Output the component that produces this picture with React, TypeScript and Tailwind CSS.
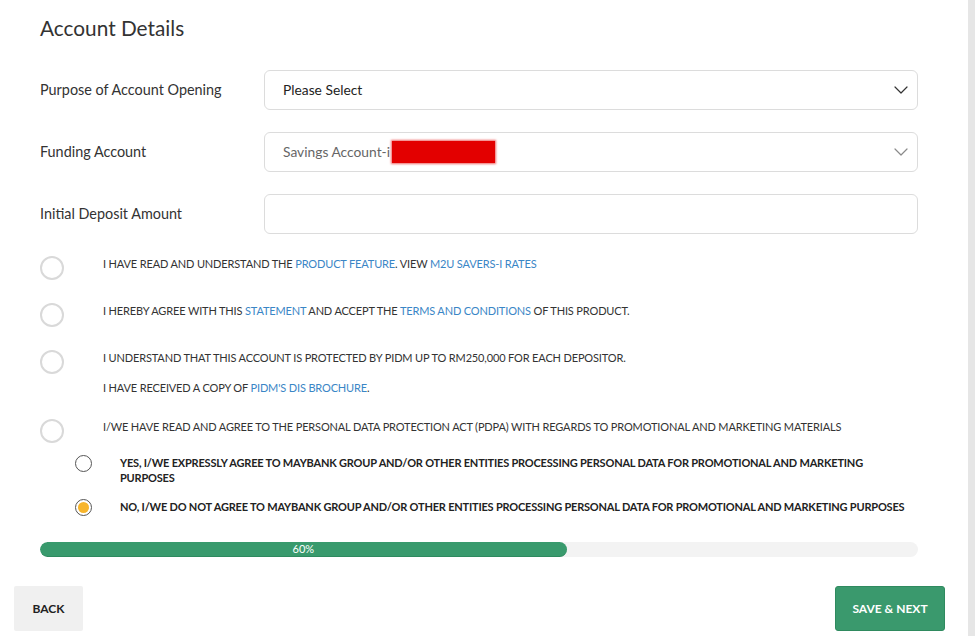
import React from "react";

const font = { fontFamily: "Lato, 'Open Sans', sans-serif" };

function Chevron({ light }: { light?: boolean }) {
  return (
    <svg width="14" height="8" viewBox="0 0 14 8" fill="none" className="shrink-0">
      <path
        d="M1 1l6 6 6-6"
        stroke={light ? "#8a8a8a" : "#333333"}
        strokeWidth="1.2"
        strokeLinecap="round"
        strokeLinejoin="round"
      />
    </svg>
  );
}

function Field({ label, children }: { label: string; children: React.ReactNode }) {
  return (
    <div className="flex items-center">
      <div className="w-[224px] shrink-0 text-[14.4px] text-[#333]">{label}</div>
      <div className="flex h-[40px] flex-1 items-center rounded-[6px] border border-[#dcdcdc] bg-white pl-[18px] pr-[9px] text-[13.8px]">
        {children}
      </div>
    </div>
  );
}

const A = ({ children }: { children: React.ReactNode }) => (
  <span className="text-[#3a86c6]">{children}</span>
);

function Check({ children }: { children: React.ReactNode }) {
  return (
    <div className="flex items-start">
      <div className="h-[24px] w-[24px] shrink-0 rounded-full border-2 border-[#d9d9d9] bg-white" />
      <div className="ml-[39px] text-[11px] leading-[16px] tracking-[-0.15px] text-[#333] uppercase">{children}</div>
    </div>
  );
}

function Radio({ checked, children }: { checked?: boolean; children: React.ReactNode }) {
  return (
    <div className="ml-[35px] flex items-start">
      <div className="flex h-[17px] w-[17px] shrink-0 items-center justify-center rounded-full border-[1.5px] border-[#555] bg-white">
        {checked && <div className="h-[11px] w-[11px] rounded-full bg-[#f7b52c]" />}
      </div>
      <div className="ml-[28px] text-[11px] font-bold leading-[15px] tracking-[-0.2px] text-[#222] uppercase">{children}</div>
    </div>
  );
}

export default function App() {
  return (
    <div className="flex h-[636px] w-[975px] bg-white" style={font}>
      <div className="flex flex-1 flex-col">
        <div className="pl-[40px] pr-[50px]">
          <h1 className="pt-[14px] text-[20.8px] leading-[28px] text-[#333]">Account Details</h1>

          <div className="mt-[28px] flex flex-col gap-[22px]">
            <Field label="Purpose of Account Opening">
              <span className="flex-1 text-[#222]">Please Select</span>
              <Chevron />
            </Field>
            <Field label="Funding Account">
              <span className="flex flex-1 items-center text-[#666]">
                Savings Account-i
                <span className="ml-[2px] inline-block h-[22px] w-[103px] bg-[#e30000] shadow-[0_0_2px_1px_rgba(227,0,0,0.6)]" />
              </span>
              <Chevron light />
            </Field>
            <Field label="Initial Deposit Amount">
              <span />
            </Field>
          </div>

          <div className="mt-[22px] flex flex-col gap-[23px]">
            <Check>
              I have read and understand the <A>Product Feature</A>. View <A>M2U Savers-i Rates</A>
            </Check>
            <Check>
              I hereby agree with this <A>Statement</A> and accept the <A>Terms and Conditions</A> of this product.
            </Check>
            <Check>
              <p>I understand that this account is protected by PIDM up to RM250,000 for each depositor.</p>
              <p className="mt-[14px]">
                I have received a copy of <A>PIDM's DIS Brochure</A>.
              </p>
            </Check>
            <Check>
              I/We have read and agree to the Personal Data Protection Act (PDPA) with regards to promotional and marketing materials
            </Check>
          </div>

          <div className="mt-[12px] flex flex-col gap-[14px]">
            <Radio>
              Yes, I/We expressly agree to Maybank Group and/or other entities processing personal data for promotional and marketing purposes
            </Radio>
            <Radio checked>
              No, I/We do not agree to Maybank Group and/or other entities processing personal data for promotional and marketing purposes
            </Radio>
          </div>

          <div className="mt-[26px] h-[15px] w-full overflow-hidden rounded-full bg-[#f3f3f3]">
            <div
              className="flex h-full items-center justify-center rounded-full border-b border-[#2e8a5f] bg-[#399a6d] text-[11px] text-white"
              style={{ width: "60%" }}
            >
              60%
            </div>
          </div>
        </div>

        <div className="mt-[29px] flex justify-between pl-[14px] pr-[23px]">
          <button className="h-[45px] w-[69px] rounded-[2px] bg-[#f0f0f0] text-[12px] font-bold text-[#222]">
            BACK
          </button>
          <button className="h-[45px] w-[110px] rounded-[3px] border border-[#2f8a5f] bg-[#3a996d] text-[12px] font-bold text-white">
            SAVE &amp; NEXT
          </button>
        </div>
      </div>
      <div className="w-[7px] shrink-0 bg-[#e6e6e6]" />
    </div>
  );
}
